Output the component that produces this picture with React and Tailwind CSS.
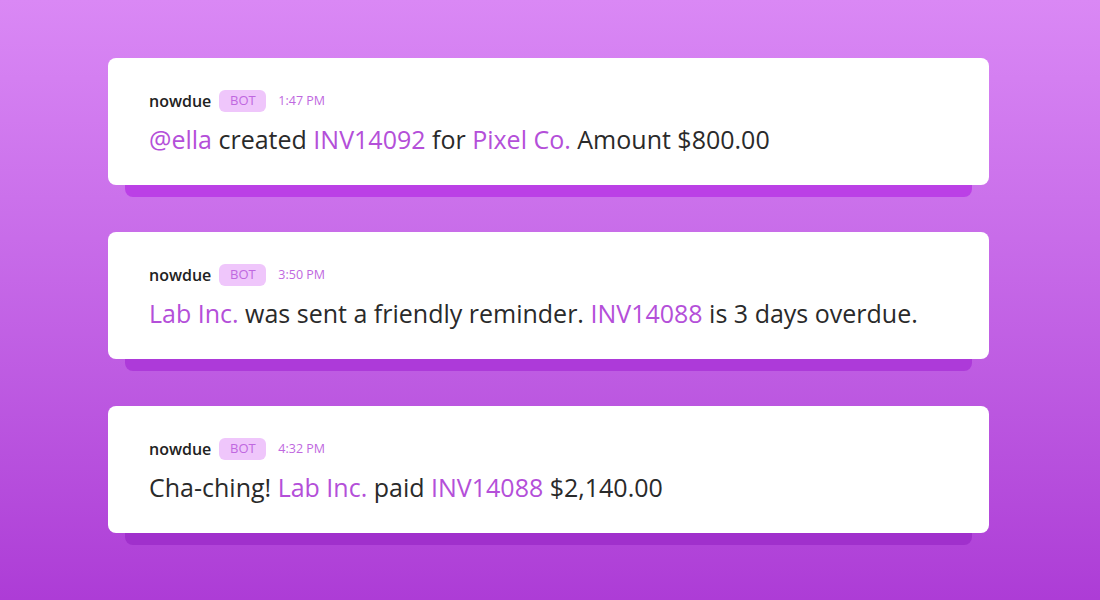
export default function App() {
  const P = ({ children }) => <span className="text-[#b44fd9]">{children}</span>;
  const cards = [
    {
      time: "1:47 PM",
      strip: "bg-[#bb40e6]",
      text: (
        <>
          <P>@ella</P> created <P>INV14092</P> for <P>Pixel Co.</P> Amount $800.00
        </>
      ),
    },
    {
      time: "3:50 PM",
      strip: "bg-[#ad3ad9]",
      text: (
        <>
          <P>Lab Inc.</P> was sent a friendly reminder. <P>INV14088</P> is 3 days overdue.
        </>
      ),
    },
    {
      time: "4:32 PM",
      strip: "bg-[#a030cc]",
      text: (
        <>
          Cha-ching! <P>Lab Inc.</P> paid <P>INV14088</P> $2,140.00
        </>
      ),
    },
  ];
  return (
    <div
      className="w-[1100px] h-[600px] bg-gradient-to-b from-[#da88f5] to-[#ad3cd6] pt-[58px] pl-[108px] pr-[111px] flex flex-col gap-[35px]"
      style={{ fontFamily: '"Open Sans", sans-serif' }}
    >
      {cards.map((c, i) => (
        <div key={i} className="flex flex-col">
          <div className="bg-white rounded-lg h-[127px] pl-[41px] pt-[31px]">
            <div className="flex items-center h-[24px]">
              <span className="text-[16px] font-semibold text-[#222]">nowdue</span>
              <span className="ml-[8px] w-[47px] h-[22px] rounded-md bg-[#efc6fb] text-[#c068e0] text-[13px] flex items-center justify-center">
                BOT
              </span>
              <span className="ml-[12px] text-[12.5px] text-[#c068e0]">{c.time}</span>
            </div>
            <div className="mt-[11px] text-[25px] leading-[30px] text-[#2a2a2a]">{c.text}</div>
          </div>
          <div className={`mx-[17px] h-[12px] rounded-b-lg ${c.strip}`} />
        </div>
      ))}
    </div>
  );
}
